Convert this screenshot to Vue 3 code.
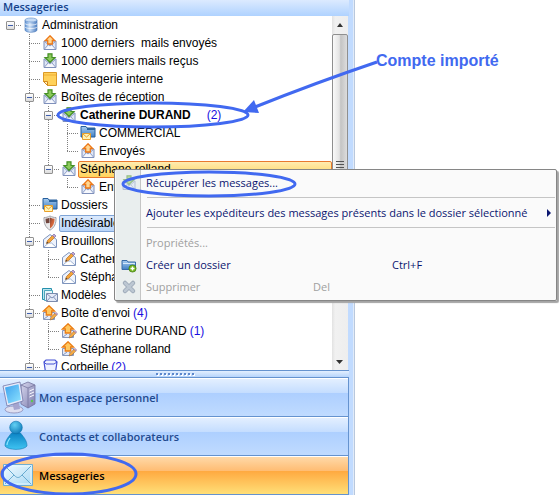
<script setup>
import { ref } from 'vue'

// guides: one entry per indentation column, drawn left to right
// '' empty, 'v' vertical, 't' tee, 'l' elbow, 'n' toggle without vertical line, 'vb' toggle with line above and below, 'e' last toggle
const rows = ref([
  { label: 'Administration', icon: 'database', guides: ['n'] },
  { label: '1000 derniers\u00a0 mails envoyés', icon: 'sent', guides: ['', 't'] },
  { label: '1000 derniers mails reçus', icon: 'inbox', guides: ['', 't'] },
  { label: 'Messagerie interne', icon: 'note', guides: ['', 't'] },
  { label: 'Boîtes de réception', icon: 'inbox', guides: ['', 'vb'] },
  { label: 'Catherine DURAND', icon: 'inbox', guides: ['', 'v', 'vb'], count: 2, kind: 'unread' },
  { label: 'COMMERCIAL', icon: 'mailfolder', guides: ['', 'v', 'v', 't'] },
  { label: 'Envoyés', icon: 'sent', guides: ['', 'v', 'v', 'l'] },
  { label: 'Stéphane rolland', icon: 'inbox', guides: ['', 'v', 'e'], kind: 'hot' },
  { label: 'Envoyés', icon: 'sent', guides: ['', 'v', '', 'l'] },
  { label: 'Dossiers', icon: 'mailfolder', guides: ['', 't'] },
  { label: 'Indésirables', icon: 'shield', guides: ['', 't'], kind: 'selected' },
  { label: 'Brouillons', icon: 'draft', guides: ['', 'vb'] },
  { label: 'Catherine DURAND', icon: 'draft', guides: ['', 'v', 't'] },
  { label: 'Stéphane rolland', icon: 'draft', guides: ['', 'v', 'l'] },
  { label: 'Modèles', icon: 'templates', guides: ['', 't'] },
  { label: "Boîte d'envoi", icon: 'outbox', guides: ['', 'vb'], count: 4 },
  { label: 'Catherine DURAND', icon: 'outbox', guides: ['', 'v', 't'], count: 1 },
  { label: 'Stéphane rolland', icon: 'outbox', guides: ['', 'v', 'l'] },
  { label: 'Corbeille', icon: 'bin', guides: ['', 'vb'], count: 2 },
])

const sections = [
  { label: 'Mon espace personnel', icon: 'computer' },
  { label: 'Contacts et collaborateurs', icon: 'person' },
  { label: 'Messageries', icon: 'letter' },
]
const active = ref('Messageries')
const isToggle = (g) => ['n', 'vb', 'e'].includes(g)
</script>

<template>
  <svg class="defs" aria-hidden="true">
    <defs>
      <linearGradient id="gBlue" x1="0" y1="0" x2="0" y2="1"><stop offset="0" stop-color="#a9cdf0" /><stop offset="1" stop-color="#3f7fc4" /></linearGradient>
      <linearGradient id="gDb" x1="0" y1="0" x2="1" y2="0"><stop offset="0" stop-color="#5f93d4" /><stop offset=".4" stop-color="#cfe2f8" /><stop offset="1" stop-color="#4a7cc0" /></linearGradient>
      <linearGradient id="gScreen" x1="0" y1="0" x2="1" y2="1"><stop offset="0" stop-color="#3aa0ee" /><stop offset="1" stop-color="#8fe4ff" /></linearGradient>
      <linearGradient id="gCase" x1="0" y1="0" x2="1" y2="1"><stop offset="0" stop-color="#d8d8ee" /><stop offset="1" stop-color="#7c7cae" /></linearGradient>
      <radialGradient id="gHead" cx=".4" cy=".3" r=".8"><stop offset="0" stop-color="#62d0f4" /><stop offset="1" stop-color="#0874b4" /></radialGradient>
      <linearGradient id="gBody" x1="0" y1="0" x2="0" y2="1"><stop offset="0" stop-color="#0b83c4" /><stop offset="1" stop-color="#3fc4f2" /></linearGradient>
      <linearGradient id="gLetter" x1="0" y1="0" x2="1" y2="1"><stop offset="0" stop-color="#f2fbff" /><stop offset="1" stop-color="#a8d8f4" /></linearGradient>
      <linearGradient id="gShield" x1="0" y1="0" x2="1" y2="1"><stop offset="0" stop-color="#7d4335" /><stop offset=".5" stop-color="#cf6238" /><stop offset="1" stop-color="#e88a55" /></linearGradient>
    </defs>
    <symbol id="env" viewBox="0 0 16 16">
      <path d="M2 6h12v8.500H2z" fill="#dfe7f7" stroke="#7f90bb" />
      <path d="M2.500 14l4-4.500h3l4 4.500" fill="#f6f8fd" stroke="#8c9dc6" />
      <path d="M2.500 6.500L8 11l5.500-4.500" fill="none" stroke="#8c9dc6" />
    </symbol>
    <symbol id="pencil" viewBox="0 0 16 16">
      <path d="M5.500 12.500l1-3 5-5 2 2-5 5z" fill="#f4a53a" stroke="#b96b20" stroke-width=".7" />
      <path d="M11.500 4.500L13 3l2 2-1.500 1.500z" fill="#c6a5cf" stroke="#7770a8" stroke-width=".7" />
      <path d="M5.500 12.500l.5-1.800 1.300 1.300z" fill="#333" />
    </symbol>
    <symbol id="i-database" viewBox="0 0 16 16">
      <path d="M2 3v10c0 3 12 3 12 0V3z" fill="url(#gDb)" stroke="#5b86c2" stroke-width=".7" />
      <ellipse cx="8" cy="3" rx="6" ry="2" fill="#c6dbf4" stroke="#6e98cf" stroke-width=".7" />
      <path d="M2 6.500c1 2 11 2 12 0M2 10c1 2 11 2 12 0" fill="none" stroke="#fff" stroke-width=".7" />
    </symbol>
    <symbol id="i-sent" viewBox="0 0 16 16">
      <use href="#env" /><path d="M8 .8l4.700 4.700h-2.400V9H5.700V5.500H3.300z" fill="#ffd893" stroke="#ed7817" stroke-width="1.300" />
    </symbol>
    <symbol id="i-inbox" viewBox="0 0 16 16">
      <use href="#env" /><path d="M6 .8h4v3.700h3L8 9.500 3 4.500h3z" fill="#8ccb5c" stroke="#458f25" stroke-width="1.200" />
    </symbol>
    <symbol id="i-note" viewBox="0 0 16 16">
      <path d="M1.500 1.500h13v13h-9l-4-4z" fill="#ffd15a" stroke="#dc9a28" /><path d="M2 4h12" stroke="#f0af35" /><path d="M1.500 10.500h4v4z" fill="#fff0b6" stroke="#d2881c" />
    </symbol>
    <symbol id="i-mailfolder" viewBox="0 0 16 16">
      <path d="M1 12V1.500h5l1 1.500h8v9z" fill="url(#gBlue)" stroke="#275f9d" /><path d="M7 3h8v2H7z" fill="#2c659f" /><path d="M2.500 8.500h8v6h-8z" fill="#fff3b5" stroke="#e8a02b" /><path d="M3 9l3.500 3L10 9" fill="none" stroke="#e8a02b" />
    </symbol>
    <symbol id="i-shield" viewBox="0 0 16 16">
      <path d="M8 1c2 1 4 1.600 6 1.500.3 6-1.500 10-6 12.700C3.500 12.500 1.700 8.500 2 2.500 4 2.600 6 2 8 1z" fill="#e9e9ea" stroke="#a2a2a8" />
      <path d="M7.500 2.800C6 3.500 4.900 3.800 3.500 3.800c0 1.700.2 3 .6 4.400L7.500 8z" fill="#71453d" />
      <path d="M8 2.500c1.500.8 3 1.200 4.600 1.200.1 4.500-1.500 7.500-4.600 9.700z" fill="url(#gShield)" />
    </symbol>
    <symbol id="i-draft" viewBox="0 0 16 16">
      <path d="M1.500 6.500L8 1.500l6.500 5v8h-13z" fill="#eef3fc" stroke="#7e94bd" /><path d="M2 14l4.500-4h3L14 14" fill="#fff" stroke="#9eb0d0" /><use href="#pencil" x="-1" y="-2" />
    </symbol>
    <symbol id="i-templates" viewBox="0 0 16 16">
      <path d="M.5 1.500h9v11h-9z" fill="#bde4ee" stroke="#2590ad" /><path d="M2.500 3.500h8v10h-8z" fill="#e3f5fa" stroke="#4ca6bc" /><path d="M4.500 6.500h11v8h-11z" fill="#e4eaf8" stroke="#7b8bad" /><path d="M5 7l5 4 5-4M5 14l3.500-4M15 14l-3.500-4" fill="none" stroke="#8293b8" />
    </symbol>
    <symbol id="i-outbox" viewBox="0 0 16 16">
      <path d="M1.500 7.500h11v7h-11z" fill="#e4eaf8" stroke="#8698bd" /><path d="M2 14l4-3M12 14l-4-3" stroke="#8698bd" /><path d="M7 .8l5.500 5.200H9.700v4H4.300V6H1.500z" fill="#ffc75e" stroke="#eb7d13" stroke-width="1.300" />
      <path d="M8 15l1-2.700 4-4 1.800 1.800-4 4z" fill="#f9ad45" stroke="#9b6a3a" stroke-width=".6" /><path d="M13 8.300l1-1 1.800 1.800-1 1z" fill="#dba3b6" stroke="#7770a8" stroke-width=".5" />
    </symbol>
    <symbol id="i-bin" viewBox="0 0 16 16">
      <path d="M2 3l2-2h9l2 2-1.500 10-2 2h-6l-2-2z" fill="#eef1ff" stroke="#4550d4" stroke-width="1.200" /><path d="M2 3l2 2h8l3-2" fill="none" stroke="#4550d4" />
    </symbol>
    <symbol id="i-newfolder" viewBox="0 0 16 16">
      <path d="M1 12.500v-9h5l1 1.500h7.500v7.500z" fill="url(#gBlue)" stroke="#386ca7" /><path d="M2 6.500h12" stroke="#d6e9fb" /><circle cx="11.500" cy="11.500" r="3.600" fill="#72b51d" stroke="#3f7a14" stroke-width=".7" /><path d="M11.500 9.500v4M9.500 11.500h4" stroke="#fff" stroke-width="1.400" />
    </symbol>
    <symbol id="i-delete" viewBox="0 0 16 16">
      <path d="M4 4l8 8M12 4l-8 8" stroke="#9eabb9" stroke-width="4.500" stroke-linecap="round" /><path d="M4 4l8 8M12 4l-8 8" stroke="#bcc7d2" stroke-width="2.500" stroke-linecap="round" />
    </symbol>
    <symbol id="i-computer" viewBox="0 0 34 34">
      <path d="M19 4l7-3 7 3v19l-7 4-7-4z" fill="url(#gCase)" stroke="#73739e" stroke-width=".8" /><path d="M19 4l7 3 7-3M26 7v20" fill="none" stroke="#77779f" stroke-width=".8" /><path d="M27.500 10l4.500-2M27.500 13l4.500-2M27.500 16l4.500-2" stroke="#fafaff" /><circle cx="30" cy="20" r="1.200" fill="#5bc94c" />
      <ellipse cx="12" cy="28.500" rx="9" ry="3.500" fill="#dedff0" stroke="#8b8cb6" stroke-width=".8" /><path d="M10 21l7 1 1 6-6 1z" fill="#a5a5cf" />
      <path d="M1 5l17-4 3 19-16 5z" fill="#e6eafa" stroke="#7478a9" stroke-width=".8" /><path d="M3 6.500l13.500-3.200L19 18.800 6.300 22.500z" fill="url(#gScreen)" />
    </symbol>
    <symbol id="i-person" viewBox="0 0 34 34">
      <path d="M9.500 13C5.500 18 3 21 3 26c3 4.500 19 4.500 22 0 0-5-2.500-8-6.500-13z" fill="url(#gBody)" stroke="#137bb2" stroke-width=".6" /><circle cx="14" cy="7.500" r="6.300" fill="url(#gHead)" stroke="#0a71ac" stroke-width=".6" /><path d="M8 18c-2 3-3 5-3 7" fill="none" stroke="#8ce6ff" stroke-width="1.200" />
    </symbol>
    <symbol id="i-letter" viewBox="0 0 34 34">
      <path d="M1.500 5.500h29v21h-29z" fill="url(#gLetter)" stroke="#6faed2" /><path d="M3 7h26v18H3z" fill="none" stroke="#e7f9ff" /><path d="M3 7l10 10c2 2 4 2 6 0L29 7M3 25l9-9M29 25l-9-9" fill="none" stroke="#69abd0" />
    </symbol>
  </svg>

  <div class="app">
    <aside class="sidebar">
      <h1 class="title">Messageries</h1>
      <div class="pane">
        <ul class="tree">
          <li v-for="(row, i) in rows" :key="i" class="row">
            <span v-for="(g, j) in row.guides" :key="j" class="guide" :class="g && 'g-' + g">
              <button v-if="isToggle(g)" class="toggle" type="button" :aria-label="row.label"></button>
            </span>
            <svg class="icon" aria-hidden="true"><use :href="'#i-' + row.icon" /></svg>
            <span class="label" :class="row.kind">{{ row.label }}</span>
            <span v-if="row.count" class="count">({{ row.count }})</span>
          </li>
        </ul>
        <div class="scroll" aria-hidden="true">
          <svg class="arrow" viewBox="0 0 16 18"><path d="M5 11l3-4 3 4z" fill="#333" /></svg>
          <div class="thumb"><i></i><i></i><i></i><i></i></div>
          <svg class="arrow last" viewBox="0 0 16 18"><path d="M4 8h7l-3.500 4z" fill="#333" /></svg>
        </div>
      </div>
      <div class="splitter"><i v-for="n in 10" :key="n"></i></div>
      <nav class="sections">
        <button v-for="s in sections" :key="s.label" type="button" class="section" :class="{ active: active === s.label }" @click="active = s.label">
          <svg class="big" aria-hidden="true"><use :href="'#i-' + s.icon" /></svg>
          <span>{{ s.label }}</span>
        </button>
      </nav>
    </aside>
    <div class="edge"></div>

    <div class="menu" role="menu">
      <button type="button" role="menuitem" class="item"><svg class="icon faded" aria-hidden="true"><use href="#i-inbox" /></svg><span>Récupérer les messages...</span></button>
      <hr class="sep" />
      <button type="button" role="menuitem" class="item"><i class="icon"></i><span>Ajouter les expéditeurs des messages présents dans le dossier sélectionné</span><svg class="sub" viewBox="0 0 4 8" aria-hidden="true"><path d="M0 0l4 4-4 4z" fill="#0b1670" /></svg></button>
      <hr class="sep" />
      <button type="button" role="menuitem" class="item" disabled><i class="icon"></i><span>Propriétés...</span></button>
      <button type="button" role="menuitem" class="item create"><svg class="icon" aria-hidden="true"><use href="#i-newfolder" /></svg><span class="name">Créer un dossier</span><span>Ctrl+F</span></button>
      <button type="button" role="menuitem" class="item remove" disabled><svg class="icon" aria-hidden="true"><use href="#i-delete" /></svg><span class="name">Supprimer</span><span>Del</span></button>
    </div>

    <svg class="marks" aria-hidden="true">
      <g fill="none" stroke="#4169f0" stroke-width="3">
        <ellipse cx="153" cy="115" rx="95" ry="12" />
        <ellipse cx="209" cy="184" rx="86" ry="12" />
        <ellipse cx="69" cy="474" rx="67" ry="20" />
        <path d="M377 62Q315 83 255 107" />
      </g>
      <path d="M243 112l11-12 5 13z" fill="#4169f0" />
    </svg>
    <p class="callout">Compte importé</p>
  </div>
</template>

<style>
body { background: #fff; overflow: hidden; }
</style>

<style scoped>
.defs { position: absolute; width: 0; height: 0; }
.app { position: relative; display: flex; height: 100vh; font: 12px/18px "Liberation Sans", Arial, sans-serif; color: #000; }
.sidebar { display: flex; flex-direction: column; flex: 0 0 349px; min-width: 0; }
.title { box-sizing: border-box; height: 16px; margin: 0; padding-left: 3px; font: 600 11px/14px "Open Sans", sans-serif; color: #15428b; background: linear-gradient(#dceaff, #afd2ff); }
.pane { display: flex; flex: 1 1 0; min-height: 0; overflow: hidden; border-right: 1px solid #c1dbff; }
.tree { flex: 1; min-width: 0; margin: 0; padding: 0 0 0 1px; list-style: none; overflow: hidden; }
.row { display: flex; align-items: center; height: 18px; white-space: nowrap; }
.guide { position: relative; display: flex; align-items: center; justify-content: center; flex: 0 0 19px; height: 18px; }
.guide::before { content: ""; position: absolute; left: 9px; top: 0; width: 1px; height: 18px; }
.guide::after { content: ""; position: absolute; left: 9px; right: -2px; top: 9px; height: 1px; }
.g-v::before, .g-t::before, .g-vb::before, .g-l::before, .g-e::before { background: repeating-linear-gradient(#808080 0 1px, transparent 1px 2px); }
.g-l::before, .g-e::before { height: 9px; }
.g-t::after, .g-l::after, .g-n::after, .g-vb::after, .g-e::after { background: repeating-linear-gradient(90deg, #808080 0 1px, transparent 1px 2px); }
.toggle { position: relative; z-index: 1; box-sizing: border-box; width: 9px; height: 9px; padding: 0; border: 1px solid #919191; border-radius: 1px; background: linear-gradient(#3f5fae, #3f5fae) center / 5px 1px no-repeat, linear-gradient(#fff, #dcdcdc); }
.icon { flex: none; width: 16px; height: 16px; margin: 0 3px; }
.label { line-height: 16px; }
.label.unread { font-weight: bold; }
.label.hot { flex: 1; box-sizing: border-box; margin-left: -2px; padding-left: 1px; height: 17px; line-height: 15px; border: 1px solid #e8792e; border-radius: 2px; background: linear-gradient(#ffecb0, #ffd45c); }
.label.selected { box-sizing: border-box; width: 110px; margin-left: -2px; padding-left: 1px; height: 17px; line-height: 15px; border: 1px solid #7fa4d6; border-radius: 2px; background: linear-gradient(#dbe9fc, #b8d4f8); }
.count { margin-left: 3px; color: #1a0fe0; }
.unread + .count { margin-left: 16px; }
.scroll { display: flex; flex-direction: column; flex: 0 0 16px; background: linear-gradient(90deg, #e2e2e2, #f1f1f1 20%, #eee); }
.arrow { flex: none; width: 16px; height: 18px; }
.last { margin-top: auto; }
.thumb { display: flex; flex-direction: column; justify-content: center; align-items: center; gap: 2px; flex: 0 1 262px; min-height: 0; border: 1px solid #8f8f8f; border-radius: 2px; background: linear-gradient(90deg, #fafafa, #e4e4e4 45%, #c4c4c4 55%, #dcdcdc); }
.thumb i { width: 8px; height: 1px; background: #555; }
.splitter { display: flex; justify-content: center; align-items: center; gap: 2px; box-sizing: border-box; height: 8px; border-top: 1px solid #6593cf; border-bottom: 1px solid #6593cf; background: linear-gradient(#e3efff, #b6d4fb); }
.splitter i { width: 2px; height: 2px; background: #5c87cc; box-shadow: 1px 1px #fff; }
.sections { display: flex; flex-direction: column; border-right: 1px solid #6593cf; }
.section { display: flex; align-items: center; gap: 3px; box-sizing: border-box; height: 39px; padding: 0 0 0 2px; border: 0; border-top: 1px solid #fff; border-bottom: 1px solid #6593cf; font: 600 11px/16px "Open Sans", sans-serif; color: #1f4a8f; text-align: left; background: linear-gradient(#e3efff, #c4ddff 14px, #adcfff 14px, #c0dbff); }
.section.active { color: #000; background: linear-gradient(#ffd9a8, #ffbc72 14px, #ffa940 14px, #ffdf78); }
.big { flex: none; width: 34px; height: 34px; }
.edge { flex: 0 0 5px; background: linear-gradient(90deg, #c1dbff 4px, #e0ebfa 4px); border-right: 1px solid #b9c8dd; }
.menu { position: absolute; left: 114px; top: 169px; width: 443px; box-sizing: border-box; padding: 2px 1px; border: 1px solid #868686; border-radius: 2px; box-shadow: 2px 2px 1px #a4a4a4; background: linear-gradient(90deg, #fafafa 1px, #e9eeee 1px 25px, #c5c5c5 25px 26px, #fafafa 26px); }
.item { display: flex; align-items: center; width: 100%; height: 22px; padding: 0 4px 0 2px; border: 0; background: none; font: 11px/16px "Open Sans", sans-serif; color: #0b1670; text-align: left; white-space: nowrap; }
.item .icon { margin: 0 9px 0 3px; }
.item:disabled { color: #a0a0a0; }
.faded { opacity: .5; }
.sep { height: 1px; margin: 3px 0 4px 31px; border: 0; background: #c5c5c5; }
.sub { width: 4px; height: 8px; margin-left: auto; }
.create .name { width: 246px; }
.remove .name { width: 167px; }
.marks { position: absolute; left: 0; top: 0; width: 100%; height: 100%; pointer-events: none; }
.callout { position: absolute; left: 376px; top: 51px; margin: 0; font: bold 16px/20px "Liberation Sans", Arial, sans-serif; color: #4169f0; white-space: nowrap; }
</style>
